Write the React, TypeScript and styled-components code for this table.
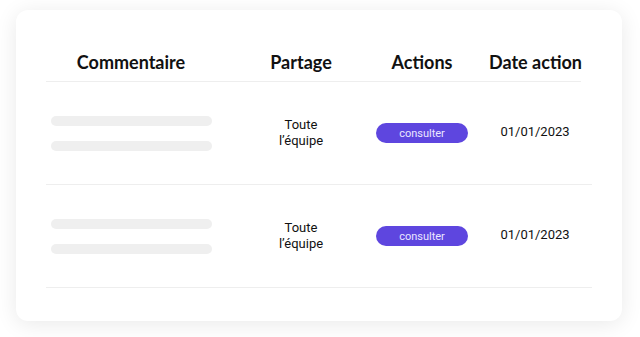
import React from 'react';
import styled, { createGlobalStyle } from 'styled-components';

const GlobalStyle = createGlobalStyle`
  html, body {
    margin: 0;
    padding: 0;
    background: #ffffff;
  }
  body {
    font-family: Roboto, "Liberation Sans", sans-serif;
    color: #111111;
  }
`;

const rows = [
  { share: ['Toute', 'l’équipe'], date: '01/01/2023' },
  { share: ['Toute', 'l’équipe'], date: '01/01/2023' },
];

// column widths shared by header and body rows; each cell's inner padding
// puts its content on the reference column centres
const gridCols = '200px 110px 112px 113px';

function App() {
  return (
    <>
      <GlobalStyle />
      <Page>
        <Card>
          <HeaderRow>
            <HeadCell $col={1}>Commentaire</HeadCell>
            <HeadCell $col={2}>Partage</HeadCell>
            <HeadCell $col={3}>Actions</HeadCell>
            <HeadCell $col={4}>Date action</HeadCell>
          </HeaderRow>
          {rows.map((row, i) => (
            <BodyRow key={i}>
              <CommentCell>
                <Skeleton />
                <Skeleton />
              </CommentCell>
              <ShareCell>
                {row.share[0]}
                <br />
                {row.share[1]}
              </ShareCell>
              <ActionCell>
                <ConsultButton type="button">consulter</ConsultButton>
              </ActionCell>
              <DateCell>{row.date}</DateCell>
            </BodyRow>
          ))}
        </Card>
      </Page>
    </>
  );
}

export default App;

const Page = styled.div`
  width: 640px;
  height: 337px;
  padding: 10px 0 0 16px;
  box-sizing: border-box;
  overflow: hidden;
`;

const Card = styled.div`
  width: 606px;
  height: 311px;
  box-sizing: border-box;
  background: #ffffff;
  border-radius: 12px;
  box-shadow: 0 3px 22px rgba(0, 0, 0, 0.09);
  padding: 40px 30px 0 30px;
`;

const HeaderRow = styled.div`
  display: grid;
  grid-template-columns: ${gridCols};
  width: 535px;
  padding-bottom: 7px;
  border-bottom: 1px solid #eeeeee;
`;

const padFor = (col: number) =>
  col === 1 ? '0 30px 0 0' : col === 3 ? '0 0 0 20px' : col === 4 ? '0 0 0 21px' : '0';

const HeadCell = styled.div<{ $col: number }>`
  padding: ${(p) => padFor(p.$col)};
  font-family: Lato, "Noto Sans", sans-serif;
  font-weight: 700;
  font-size: 18px;
  line-height: 24px;
  text-align: center;
  white-space: nowrap;
`;

const BodyRow = styled.div`
  display: grid;
  grid-template-columns: ${gridCols} 11px;
  align-items: center;
  width: 546px;
  height: 102px;
  border-bottom: 1px solid #eeeeee;
`;

const CommentCell = styled.div`
  display: flex;
  flex-direction: column;
  gap: 15px;
  padding: 0 34px 0 5px;
`;

const Skeleton = styled.div`
  height: 10px;
  border-radius: 5px;
  background: #efefef;
`;

const ShareCell = styled.div`
  text-align: center;
  font-size: 13px;
  line-height: 16px;
  margin-top: -1px;
`;

const ActionCell = styled.div`
  display: flex;
  justify-content: center;
  padding-left: 20px;
`;

const ConsultButton = styled.button`
  width: 92px;
  height: 20px;
  border: none;
  border-radius: 10px;
  background: #5e46df;
  color: #ebe7ff;
  font-family: Roboto, sans-serif;
  font-size: 11px;
  padding: 0;
  cursor: pointer;
`;

const DateCell = styled.div`
  padding-left: 21px;
  text-align: center;
  font-size: 13px;
  margin-top: -4px;
`;
